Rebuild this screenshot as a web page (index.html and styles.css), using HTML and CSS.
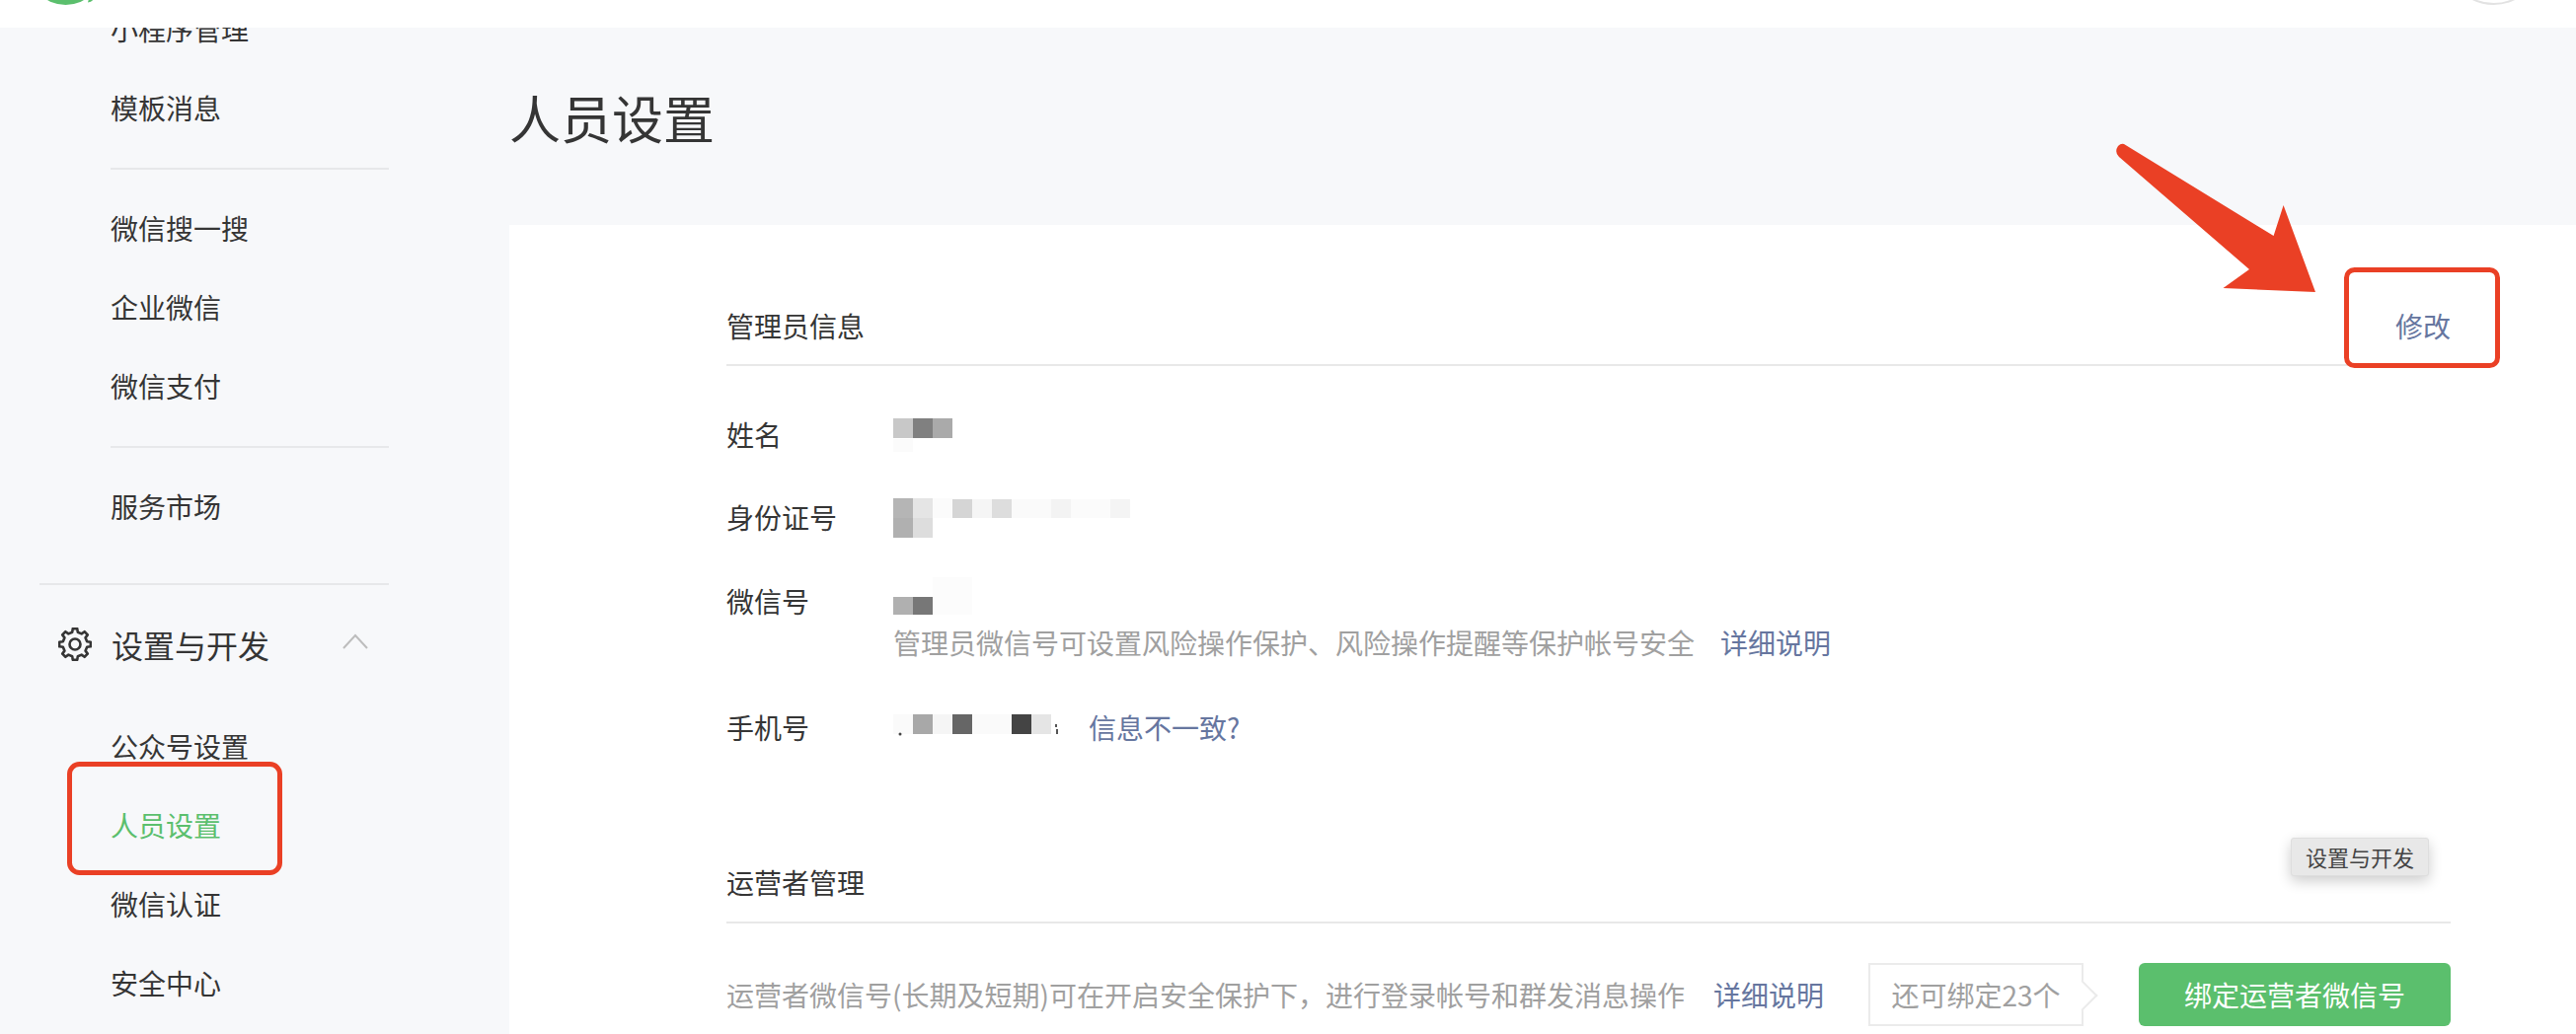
FILE: index.html
```html
<!DOCTYPE html>
<html lang="zh-CN">
<head>
    <meta charset="UTF-8">
    <title>人员设置</title>
    <link rel="stylesheet" href="styles.css">
</head>
<body>
    <header class="topbar">
        <svg class="logo" width="60" height="28" viewBox="0 0 60 28">
            <circle cx="22.5" cy="-31.7" r="36.7" fill="#5bbf6d"/>
            <path d="M45 2.5 Q49 2 51 -1 L46 -1z" fill="#5bbf6d"/>
        </svg>
        <svg class="avatar" width="52" height="28" viewBox="0 0 52 28">
            <circle cx="23.5" cy="-43" r="47" fill="none" stroke="#e2e2e2" stroke-width="2"/>
        </svg>
    </header>

    <div class="layout">
        <aside class="sidebar">
            <nav class="nav">
                <a class="nav-item">小程序管理</a>
                <a class="nav-item">模板消息</a>
                <div class="nav-rule"></div>
                <a class="nav-item">微信搜一搜</a>
                <a class="nav-item">企业微信</a>
                <a class="nav-item">微信支付</a>
                <div class="nav-rule"></div>
                <a class="nav-item">服务市场</a>
                <div class="group-rule"></div>
                <div class="group-title">
                    <svg width="34" height="34" viewBox="0 0 34 34" fill="none" stroke="#353535" stroke-width="2.6" stroke-linejoin="round">
                        <polygon points="14.19,4.82 14.77,1.16 19.23,1.16 19.81,4.82 23.62,6.4 26.63,4.22 29.78,7.37 27.6,10.38 29.18,14.19 32.84,14.77 32.84,19.23 29.18,19.81 27.6,23.62 29.78,26.63 26.63,29.78 23.62,27.6 19.81,29.18 19.23,32.84 14.77,32.84 14.19,29.18 10.38,27.6 7.37,29.78 4.22,26.63 6.4,23.62 4.82,19.81 1.16,19.23 1.16,14.77 4.82,14.19 6.4,10.38 4.22,7.37 7.37,4.22 10.38,6.4"/>
                        <circle cx="17" cy="17" r="5.5"/>
                    </svg>
                    <span>设置与开发</span>
                    <svg class="chevron" width="26" height="16" viewBox="0 0 26 16" fill="none" stroke="#bdbdbd" stroke-width="2">
                        <polyline points="1,15 13,2 25,15"/>
                    </svg>
                </div>
                <a class="nav-item">公众号设置</a>
                <a class="nav-item active">人员设置</a>
                <a class="nav-item">微信认证</a>
                <a class="nav-item">安全中心</a>
            </nav>
        </aside>

        <main class="main">
            <h1 class="page-title">人员设置</h1>
            <div class="card">
                <div class="section-head">
                    <span>管理员信息</span>
                    <a class="link">修改</a>
                </div>

                <div class="info-row first">
                    <div class="label">姓名</div>
                    <svg class="mosaic mosaic-name" width="60" height="34">
                        <rect width="20" height="20" fill="#c8c8c8"/>
                        <rect x="20" width="20" height="20" fill="#808080"/>
                        <rect x="40" width="20" height="20" fill="#aaaaaa"/>
                        <rect y="21" width="20" height="13" fill="#fbfbfb"/>
                    </svg>
                </div>

                <div class="info-row">
                    <div class="label">身份证号</div>
                    <svg class="mosaic mosaic-id" width="240" height="40">
                        <rect width="20" height="20" fill="#b5b5b5"/>
                        <rect x="20" width="20" height="20" fill="#e5e5e5"/>
                        <rect x="40" width="20" height="20" fill="#fbfbfb"/>
                        <rect x="60" y="1" width="20" height="19" fill="#d5d5d5"/>
                        <rect x="80" y="1" width="20" height="19" fill="#f5f5f5"/>
                        <rect x="100" y="1" width="20" height="19" fill="#dddddd"/>
                        <rect x="120" y="1" width="40" height="19" fill="#fafafa"/>
                        <rect x="160" y="1" width="20" height="19" fill="#f3f3f3"/>
                        <rect x="180" y="1" width="40" height="19" fill="#fbfbfb"/>
                        <rect x="220" y="1" width="20" height="19" fill="#f4f4f4"/>
                        <rect y="20" width="20" height="20" fill="#b0b0b0"/>
                        <rect x="20" y="20" width="20" height="20" fill="#dddddd"/>
                    </svg>
                </div>

                <div class="info-row">
                    <div class="label">微信号</div>
                    <div class="value">
                        <svg class="mosaic mosaic-wx" width="80" height="38">
                            <rect x="40" width="40" height="38" fill="#fcfcfc"/>
                            <rect y="20" width="20" height="18" fill="#b0b0b0"/>
                            <rect x="20" y="20" width="20" height="18" fill="#777777"/>
                        </svg>
                        <div class="hint">管理员微信号可设置风险操作保护、风险操作提醒等保护帐号安全<a class="link more">详细说明</a></div>
                    </div>
                </div>

                <div class="info-row">
                    <div class="label">手机号</div>
                    <svg class="mosaic mosaic-phone" width="198" height="28">
                        <rect width="20" height="20" fill="#fafafa"/>
                        <rect x="20" width="20" height="20" fill="#a8a8a8"/>
                        <rect x="40" width="20" height="20" fill="#f5f5f5"/>
                        <rect x="60" width="20" height="20" fill="#666666"/>
                        <rect x="80" width="40" height="20" fill="#fafafa"/>
                        <rect x="120" width="20" height="20" fill="#444444"/>
                        <rect x="140" width="20" height="20" fill="#e5e5e5"/>
                        <circle cx="7" cy="20" r="1.5" fill="#444444"/>
                        <rect x="164" y="10" width="2" height="3" fill="#555555"/>
                        <rect x="165" y="15" width="2" height="5" fill="#555555"/>
                    </svg>
                    <a class="link">信息不一致?</a>
                </div>

                <div class="section-head second">
                    <span>运营者管理</span>
                </div>

                <div class="operator-row">
                    <div class="hint">运营者微信号(长期及短期)可在开启安全保护下，进行登录帐号和群发消息操作<a class="link more">详细说明</a></div>
                    <div class="quota">还可绑定23个</div>
                    <button class="bind-btn" type="button">绑定运营者微信号</button>
                </div>
            </div>
        </main>
    </div>

    <div class="tooltip">设置与开发</div>

    <!-- 标注：红框和箭头 -->
    <svg class="marks" width="2610" height="1048" viewBox="0 0 2610 1048" fill="none">
        <rect x="70.5" y="774.5" width="213" height="110" rx="10" stroke="#ea4025" stroke-width="5"/>
        <rect x="2377.5" y="273.5" width="153" height="97" rx="8" stroke="#ea4025" stroke-width="5"/>
        <path d="M2152 146 L2303.6 239 L2313.6 208 L2346 296 L2252.5 292 L2279 273 L2147 159 Q2142 154 2146 148 Q2149 145 2152 146z" fill="#ea4025"/>
    </svg>
</body>
</html>
```

FILE: styles.css
```css
body {
    margin: 0;
    height: 1048px;
    overflow: hidden;
    background-color: #f7f8fa;
    color: #353535;
    font-family: "Noto Sans CJK SC", "Liberation Sans", sans-serif;
    font-size: 28px;
}
a {
    text-decoration: none;
}

/* top bar */
.topbar {
    display: flex;
    justify-content: space-between;
    height: 28px;
    padding: 0 55px 0 44px;
    background-color: #fff;
}
.logo, .avatar {
    display: block;
}

.layout {
    display: flex;
    height: 1020px;
    overflow: hidden;
}

/* sidebar */
.sidebar {
    flex: 0 0 516px;
    overflow: hidden;
}
.nav {
    margin-top: -39px;
}
.nav-item {
    display: block;
    height: 80px;
    padding-left: 112px;
    color: #353535;
    line-height: 80px;
}
.nav-item.active {
    color: #5bbf6d;
}
.nav-rule {
    width: 282px;
    height: 2px;
    margin: 21px 0 19px 112px;
    background-color: #e7e8ea;
}
.group-rule {
    width: 354px;
    height: 2px;
    margin: 38px 0 20px 40px;
    background-color: #e7e8ea;
}
.group-title {
    display: flex;
    align-items: center;
    gap: 20px;
    width: 314px;
    height: 80px;
    margin-bottom: 23px;
    padding-left: 59px;
    font-size: 32px;
}
.chevron {
    margin-left: auto;
    margin-bottom: 6px;
}

/* main */
.main {
    flex: 1;
    min-width: 0;
}
.page-title {
    height: 145px;
    margin: 0;
    padding-top: 55px;
    font-size: 52px;
    font-weight: 400;
    line-height: 72px;
}
.card {
    box-sizing: border-box;
    height: 820px;
    padding: 82px 127px 0 220px;
    background-color: #fff;
}
.section-head {
    display: flex;
    justify-content: space-between;
    height: 40px;
    padding-bottom: 19px;
    border-bottom: 2px solid #e8e8e8;
    line-height: 40px;
}
.section-head.second {
    margin-top: 117px;
    padding-bottom: 20px;
}
.link {
    color: #66769f;
}

/* info rows */
.info-row {
    display: flex;
    margin-top: 44px;
    line-height: 40px;
}
.info-row.first {
    margin-top: 49px;
}
.label {
    flex: 0 0 169px;
}
.mosaic {
    display: block;
    flex: none;
}
.mosaic-name {
    margin-top: 4px;
}
.mosaic-id {
    margin-top: 1px;
}
.mosaic-wx {
    margin-top: -4px;
}
.mosaic-phone {
    margin-top: 7px;
}
.hint {
    color: #a0a0a0;
    line-height: 44px;
}
.value .hint {
    margin-top: 6px;
}
.more {
    margin-left: 29px;
}
.value .more {
    margin-left: 26px;
}

/* operators */
.operator-row {
    display: flex;
    align-items: center;
    margin-top: 40px;
}
.quota {
    position: relative;
    box-sizing: border-box;
    width: 218px;
    height: 64px;
    margin-left: 45px;
    border: 2px solid #ebebeb;
    color: #a0a0a0;
    line-height: 60px;
    text-align: center;
}
.quota::after {
    content: "";
    position: absolute;
    top: 20px;
    right: -12px;
    width: 20px;
    height: 20px;
    border-top: 2px solid #ebebeb;
    border-right: 2px solid #ebebeb;
    background-color: #fff;
    transform: rotate(45deg);
}
.bind-btn {
    width: 316px;
    height: 64px;
    margin-left: auto;
    padding: 0;
    border: none;
    border-radius: 6px;
    background-color: #5bbf6d;
    color: #fff;
    font-family: inherit;
    font-size: 28px;
}

/* overlays */
.tooltip {
    position: absolute;
    top: 849px;
    left: 2321px;
    box-sizing: border-box;
    width: 140px;
    height: 39px;
    border: 1px solid #dedede;
    border-radius: 3px;
    background-color: #e8e8e8;
    box-shadow: 0 5px 14px rgba(0, 0, 0, 0.2);
    color: #444;
    font-size: 22px;
    line-height: 37px;
    text-align: center;
}
.marks {
    position: absolute;
    top: 0;
    left: 0;
}
```
